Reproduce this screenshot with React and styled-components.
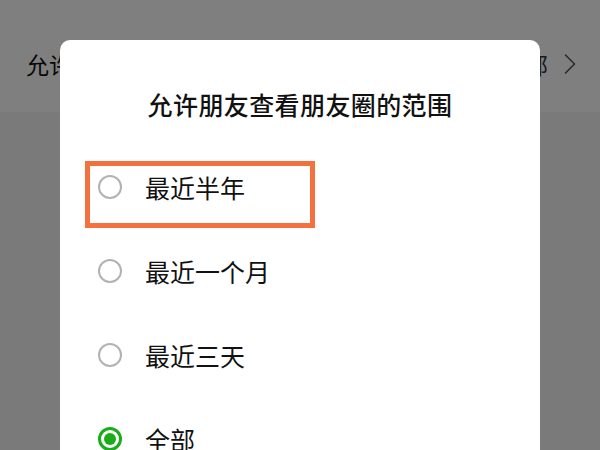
import React from 'react'
import styled, { createGlobalStyle } from 'styled-components'

const GlobalStyle = createGlobalStyle`
  html, body {
    margin: 0;
    padding: 0;
    width: 600px;
    height: 450px;
    overflow: hidden;
    font-family: "Noto Sans CJK SC", "Noto Sans", sans-serif;
  }
`

const Screen = styled.div`
  position: relative;
  width: 600px;
  height: 450px;
  overflow: hidden;
  background: #f4f4f4;
`

const SettingRow = styled.div`
  display: flex;
  align-items: center;
  justify-content: space-between;
  height: 112px;
  padding: 16px 26px 0 26px;
  box-sizing: border-box;
  background: #ffffff;
  font-size: 23px;
  color: #111;
`

const RowValue = styled.div`
  display: flex;
  align-items: center;
  gap: 16px;
  margin-right: -2px;
  color: #333;
`

const Mask = styled.div`
  position: absolute;
  inset: 0;
  background: rgba(0, 0, 0, 0.5);
`

const Dialog = styled.div`
  position: absolute;
  left: 60px;
  top: 40px;
  width: 480px;
  height: 460px;
  background: #ffffff;
  border-radius: 10px;
  box-sizing: border-box;
  padding-top: 46px;
`

const Title = styled.div`
  text-align: center;
  font-size: 25px;
  font-weight: 500;
  line-height: 36px;
  color: #111;
  letter-spacing: 0.4px;
`

const OptionList = styled.div`
  display: flex;
  flex-direction: column;
  margin-top: 23px;
`

const Option = styled.div`
  position: relative;
  display: flex;
  align-items: center;
  gap: 23px;
  height: 84px;
  padding-left: 38px;
  font-size: 25px;
  color: #111;
`

const Radio = styled.span`
  box-sizing: border-box;
  width: 24px;
  height: 24px;
  border-radius: 50%;
  border: ${p => (p.$checked ? '3px solid #1aad19' : '2px solid #b2b2b2')};
  display: flex;
  align-items: center;
  justify-content: center;
  flex-shrink: 0;
  &::after {
    content: '';
    display: ${p => (p.$checked ? 'block' : 'none')};
    width: 12px;
    height: 12px;
    border-radius: 50%;
    background: #1aad19;
  }
`

const Highlight = styled.div`
  position: absolute;
  left: 25px;
  top: 16px;
  width: 230px;
  height: 67px;
  box-sizing: border-box;
  border: 5px solid #f4703e;
`

const Chevron = () => (
  <svg width="12" height="22" viewBox="0 0 12 22" fill="none">
    <path d="M1.5 2l9 9-9 9" stroke="#555" strokeWidth="1.6" strokeLinecap="round" strokeLinejoin="round" />
  </svg>
)

const options = [
  { label: '最近半年', marked: true },
  { label: '最近一个月' },
  { label: '最近三天' },
  { label: '全部', checked: true },
]

const App = () => (
  <>
    <GlobalStyle />
    <Screen>
      <SettingRow>
        <span>允许朋友查看朋友圈的范围</span>
        <RowValue>
          全部
          <Chevron />
        </RowValue>
      </SettingRow>
      <Mask />
      <Dialog>
        <Title>允许朋友查看朋友圈的范围</Title>
        <OptionList>
          {options.map(o => (
            <Option key={o.label}>
              <Radio $checked={o.checked} />
              {o.label}
              {o.marked && <Highlight />}
            </Option>
          ))}
        </OptionList>
      </Dialog>
    </Screen>
  </>
)

export default App
